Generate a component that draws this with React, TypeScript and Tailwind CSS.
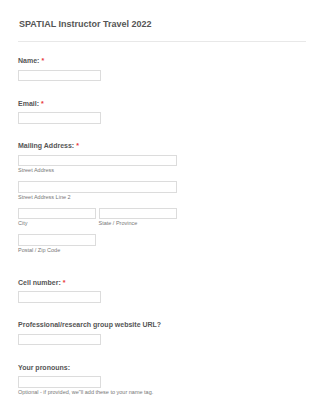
import React from "react";

const font = { fontFamily: '"Liberation Sans", Arial, sans-serif' };

function Label({ text, required }: { text: string; required?: boolean }) {
  return (
    <div className="text-[7px] leading-[10px] font-bold text-[#555]">
      {text}
      {required && <span className="ml-[2px] text-[#e8393a]">*</span>}
    </div>
  );
}

function Input({ className = "w-[82.5px]" }: { className?: string }) {
  return <div className={`h-[11.5px] border border-[#dcdcdc] bg-white ${className}`} />;
}

function Sub({ text }: { text: string }) {
  return <div className="mt-[1px] mb-[7px] text-[5.5px] leading-[7px] text-[#777]">{text}</div>;
}

export default function App() {
  return (
    <div className="w-[325px] h-[400px] overflow-hidden bg-white pl-[18px]" style={font}>
      {/* Header */}
      <div className="pt-[17.5px] text-[9px] leading-[12px] font-bold text-[#555] pl-[1px]">
        SPATIAL Instructor Travel 2022
      </div>
      <div className="mt-[11.5px] h-px w-[288px] bg-[#e8e8e8]" />

      {/* Name */}
      <div className="mt-[14px]">
        <Label text="Name:" required />
        <div className="mt-[3.5px]">
          <Input />
        </div>
      </div>

      {/* Email */}
      <div className="mt-[17.5px]">
        <Label text="Email:" required />
        <div className="mt-[3.5px]">
          <Input />
        </div>
      </div>

      {/* Mailing address */}
      <div className="mt-[17.5px]">
        <Label text="Mailing Address:" required />
        <div className="mt-[3.5px]">
          <Input className="w-[158.5px]" />
          <Sub text="Street Address" />
          <Input className="w-[158.5px]" />
          <Sub text="Street Address Line 2" />
          <div className="flex gap-[2.5px]">
            <div>
              <Input className="w-[78px]" />
              <Sub text="City" />
            </div>
            <div>
              <Input className="w-[78px]" />
              <Sub text="State / Province" />
            </div>
          </div>
          <Input className="w-[78px]" />
          <Sub text="Postal / Zip Code" />
        </div>
      </div>

      {/* Cell number */}
      <div className="mt-[24px]">
        <Label text="Cell number:" required />
        <div className="mt-[3.5px]">
          <Input />
        </div>
      </div>

      {/* Website */}
      <div className="mt-[17.5px]">
        <Label text="Professional/research group website URL?" />
        <div className="mt-[3.5px]">
          <Input />
        </div>
      </div>

      {/* Pronouns */}
      <div className="mt-[17.5px]">
        <Label text="Your pronouns:" />
        <div className="mt-[3.5px]">
          <Input />
          <Sub text={'Optional - if provided, we"ll add these to your name tag.'} />
        </div>
      </div>
    </div>
  );
}
